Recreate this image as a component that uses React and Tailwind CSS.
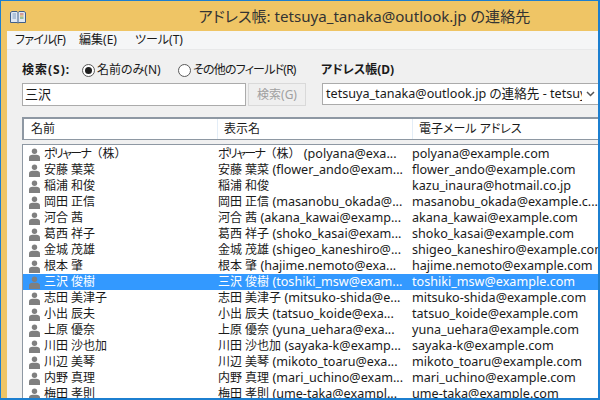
import React from "react";

const FONT = "font-['Noto_Sans','Noto_Sans_CJK_JP',sans-serif] [font-feature-settings:'palt']";

const Company = () => (
  <>
    <span className="tracking-[-1.6px]">ポリャーナ</span>
    <span className="[font-feature-settings:normal]">（株）</span>
  </>
);

const contacts = [
  [<Company />, " (polyana@exa...", "polyana@example.com"],
  ["安藤 葉菜", " (flower_ando@exam...", "flower_ando@example.com"],
  ["稲浦 和俊", "", "kazu_inaura@hotmail.co.jp"],
  ["岡田 正信", " (masanobu_okada@...", "masanobu_okada@example.c..."],
  ["河合 茜", " (akana_kawai@examp...", "akana_kawai@example.com"],
  ["葛西 祥子", " (shoko_kasai@exam...", "shoko_kasai@example.com"],
  ["金城 茂雄", " (shigeo_kaneshiro@...", "shigeo_kaneshiro@example.com"],
  ["根本 肇", " (hajime.nemoto@exa...", "hajime.nemoto@example.com"],
  ["三沢 俊樹", " (toshiki_msw@exam...", "toshiki_msw@example.com"],
  ["志田 美津子", " (mitsuko-shida@e...", "mitsuko-shida@example.com"],
  ["小出 辰夫", " (tatsuo_koide@exa...", "tatsuo_koide@example.com"],
  ["上原 優奈", " (yuna_uehara@exa...", "yuna_uehara@example.com"],
  ["川田 沙也加", " (sayaka-k@examp...", "sayaka-k@example.com"],
  ["川辺 美琴", " (mikoto_toaru@exa...", "mikoto_toaru@example.com"],
  ["内野 真理", " (mari_uchino@exam...", "mari_uchino@example.com"],
  ["梅田 孝則", " (ume-taka@exampl...", "ume-taka@example.com"],
];

const PersonIcon = () => (
  <svg width="11" height="13" viewBox="0 0 11 13" className="shrink-0">
    <circle cx="5.5" cy="3.2" r="2.7" fill="#7f7f7f" />
    <path d="M0 13V9.6C0 7.8 1.6 6.8 3.4 6.8H7.6C9.4 6.8 11 7.8 11 9.6V13Z" fill="#7f7f7f" />
  </svg>
);

const BookIcon = () => (
  <svg width="16" height="14" viewBox="0 0 16 14">
    <path d="M0.5 2.5L2 1.5H7L8 2.5L9 1.5H14L15.5 2.5V12.5H9L8 13L7 12.5H0.5Z" fill="#dfe8f3" stroke="#3f5f8a" />
    <path d="M8 2.5V12.5" stroke="#3f5f8a" />
    <path d="M2.5 4H6M2.5 6H6M2.5 8H6" stroke="#7f9cc0" />
    <path d="M10 4H13.5" stroke="#c9503c" />
    <path d="M10 6H13.5" stroke="#d9a032" />
    <path d="M10 8H13.5" stroke="#4f9a4a" />
  </svg>
);

const Radio = ({ checked }) => (
  <span className="w-[13px] h-[13px] rounded-full border border-[#5a5a5a] bg-white flex items-center justify-center shrink-0">
    {checked && <span className="w-[7px] h-[7px] rounded-full bg-[#1f1f1f]" />}
  </span>
);

export default function App() {
  return (
    <div className={`${FONT} w-[600px] h-[400px] overflow-hidden flex flex-col bg-[#efc565] border-t border-l border-r-2 border-b-2 border-[#1c7fd0] text-[12px] text-[#1a1a1a]`}>
      <div className="h-[30px] shrink-0 relative flex items-center justify-center pl-[130px] text-[15.1px] text-[#333]">
        <span className="absolute left-[9px] top-[9px]">
          <BookIcon />
        </span>
        <span>アドレス帳: tetsuya_tanaka@outlook.jp の連絡先</span>
      </div>

      <div className="flex-1 min-h-0 ml-[6px] flex flex-col bg-[#f0f0f0]">
        <div className="h-[19px] shrink-0 flex items-center gap-[14px] pl-[8px] bg-[#f5f6f7] border-b border-[#e8e9ea]">
          <span className="tracking-[-0.7px]">ファイル(F)</span>
          <span>編集(E)</span>
          <span className="ml-[4px]">ツール(T)</span>
        </div>

        <div className="flex pl-[15px] pt-[10px] h-[67px] shrink-0">
          <div className="w-[299px] shrink-0">
            <div className="flex items-center h-[20px]">
              <span className="font-bold w-[60px] tracking-[1px]">検索(S):</span>
              <Radio checked />
              <span className="ml-[2px] w-[81px]">名前のみ(N)</span>
              <Radio />
              <span className="ml-[2px] whitespace-nowrap tracking-[-0.8px]">その他のフィールド(R)</span>
            </div>
            <div className="flex mt-[3px]">
              <div className="w-[224px] h-[23px] bg-white border border-[#ababab] px-[2px] text-[13px] flex items-center">三沢</div>
              <div className="ml-[2px] w-[58px] h-[23px] bg-[#efefef] border border-[#d9d9d9] text-[#a0a0a0] flex items-center justify-center">検索(G)</div>
            </div>
          </div>
          <div className="flex-1 min-w-0">
            <div className="h-[20px] flex items-center font-bold">アドレス帳(D)</div>
            <div className="mt-[3px] ml-[1px] h-[22px] bg-white border border-[#ababab] border-r-0 flex items-center pl-[3px] overflow-hidden relative">
              <span className="whitespace-nowrap text-[12.6px]">tetsuya_tanaka@outlook.jp の連絡先 - tetsuya</span>
              <span className="absolute right-0 top-0 bottom-0 w-[16px] bg-white flex items-center justify-center">
                <svg width="9" height="6" viewBox="0 0 9 6">
                  <path d="M1 1L4.5 4.5L8 1" fill="none" stroke="#555" strokeWidth="1.5" />
                </svg>
              </span>
            </div>
          </div>
        </div>

        <div className="ml-[15px] h-[23px] shrink-0 bg-white border-2 border-r-0 border-[#8e98a3] border-b flex items-center">
          <div className="w-[194px] h-full pl-[7px] flex items-center border-r border-[#e3edf7]">名前</div>
          <div className="w-[195px] h-full pl-[6px] flex items-center border-r border-[#e3edf7]">表示名</div>
          <div className="pl-[6px] whitespace-nowrap">電子メール アドレス</div>
        </div>

        <div className="ml-[15px] mt-[4px] flex-1 min-h-0 overflow-hidden bg-white border-t border-l border-[#8e98a3] pt-[1px]">
          {contacts.map((c, i) => {
            const selected = i === 8;
            return (
              <div key={c[2]} className={`h-[16px] flex items-center leading-[16px] whitespace-pre ${selected ? "bg-[#3399ff] text-white" : ""}`}>
                <div className="w-[195px] shrink-0 pl-[6px] flex items-center gap-[4px]">
                  <PersonIcon />
                  <span>{c[0]}</span>
                </div>
                <div className="w-[194px] shrink-0 overflow-hidden">
                  {c[0]}
                  <span className="text-[12.6px]">{c[1]}</span>
                </div>
                <div className="text-[12.6px]">{c[2]}</div>
              </div>
            );
          })}
        </div>
      </div>
    </div>
  );
}
